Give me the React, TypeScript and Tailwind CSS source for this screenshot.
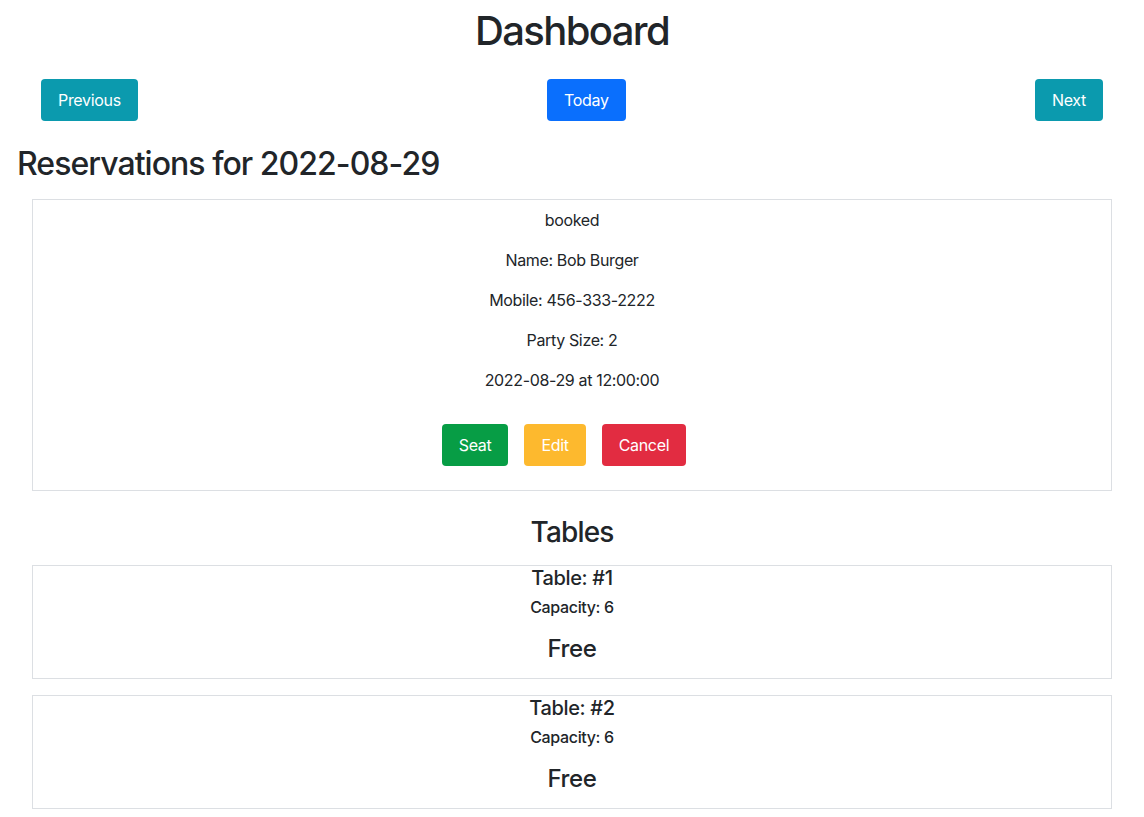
const reservation = {
  status: "booked",
  name: "Bob Burger",
  mobile: "456-333-2222",
  people: 2,
  date: "2022-08-29",
  time: "12:00:00",
};

const tables = [
  { id: 1, capacity: 6 },
  { id: 2, capacity: 6 },
];

function Btn({
  color,
  children,
  className = "",
}: {
  color: string;
  children: React.ReactNode;
  className?: string;
}) {
  return (
    <button
      className={`rounded border border-transparent px-4 py-2 text-base leading-6 tracking-[-0.02em] text-white ${color} ${className}`}
      type="button"
    >
      {children}
    </button>
  );
}

export default function App() {
  return (
    <div className="min-h-screen bg-white px-4 text-[#212529] font-['Inter',sans-serif] tracking-[-0.022em]">
      <h1 className="pt-[7px] text-center text-[40px] font-medium leading-[48px] tracking-[-0.04em]">
        Dashboard
      </h1>

      <div className="mt-6 flex items-center justify-between px-[25px]">
        <Btn color="bg-[#0b9aae]">Previous</Btn>
        <Btn color="bg-[#0a6ffd]">Today</Btn>
        <Btn color="bg-[#0b9aae]">Next</Btn>
      </div>

      <h2 className="mt-6 pl-px text-[32px] font-medium leading-[38px] tracking-[-0.03em]">
        Reservations for {reservation.date}
      </h2>

      <div className="mx-4 mt-4 border border-[#dcdfe3] pb-2 pt-2 text-center">
        <p className="mb-4 leading-6">{reservation.status}</p>
        <p className="mb-4 leading-6">Name: {reservation.name}</p>
        <p className="mb-4 leading-6">Mobile: {reservation.mobile}</p>
        <p className="mb-4 leading-6">Party Size: {reservation.people}</p>
        <p className="mb-4 leading-6">
          {reservation.date} at {reservation.time}
        </p>
        <div className="mb-4 mt-8 flex justify-center">
          <Btn className="mr-4" color="bg-[#079d45]">
            Seat
          </Btn>
          <Btn className="mr-4" color="bg-[#fdb92e]">
            Edit
          </Btn>
          <Btn className="mr-4" color="bg-[#e22c41]">
            Cancel
          </Btn>
        </div>
      </div>

      <h3 className="mt-6 text-center text-[28px] font-medium leading-[34px] tracking-[-0.03em]">
        Tables
      </h3>

      <div className="mt-4 flex flex-col gap-4">
        {tables.map((table) => (
          <div
            className="mx-4 border border-[#dcdfe3] text-center"
            key={table.id}
          >
            <h5 className="mb-2 text-xl font-medium leading-6">
              Table: #{table.id}
            </h5>
            <h6 className="text-base font-medium leading-[1.2]">
              Capacity: {table.capacity}
            </h6>
            <h4 className="mb-[14px] mt-[18px] text-2xl font-medium leading-[1.2]">
              Free
            </h4>
          </div>
        ))}
      </div>
    </div>
  );
}
